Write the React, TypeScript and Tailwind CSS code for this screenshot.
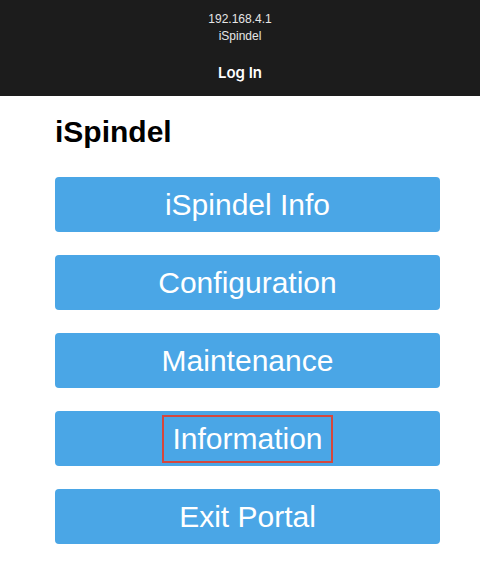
const items = ['iSpindel Info', 'Configuration', 'Maintenance', 'Information', 'Exit Portal'];

export default function App() {
  return (
    <div className="w-[480px] h-[562px] bg-white overflow-hidden" style={{ fontFamily: '"Liberation Sans", Arial, sans-serif' }}>
      <header className="h-[96px] bg-[#1c1c1c] flex flex-col items-center text-[#e6e6e6]">
        <div className="mt-[11px] text-[12px] leading-[17px]">192.168.4.1</div>
        <div className="text-[12px] leading-[17px]">iSpindel</div>
        <div className="mt-[18px] text-[15px] font-semibold text-white leading-[20px] font-['Inter',sans-serif]">Log In</div>
      </header>
      <main className="px-[55px] pt-[18px]">
        <h1 className="text-[30px] font-bold text-black leading-[36px]">iSpindel</h1>
        <div className="mt-[27px] flex flex-col gap-[23px]">
          {items.map((label) => (
            <button
              key={label}
              className="h-[55px] w-[385px] rounded-[4px] bg-[#4aa6e6] text-white text-[30px] flex items-center justify-center"
            >
              {label === 'Information' ? (
                <span className="border-2 border-[#d6473d] px-[8px] h-[48px] flex items-center">{label}</span>
              ) : (
                label
              )}
            </button>
          ))}
        </div>
      </main>
    </div>
  );
}
